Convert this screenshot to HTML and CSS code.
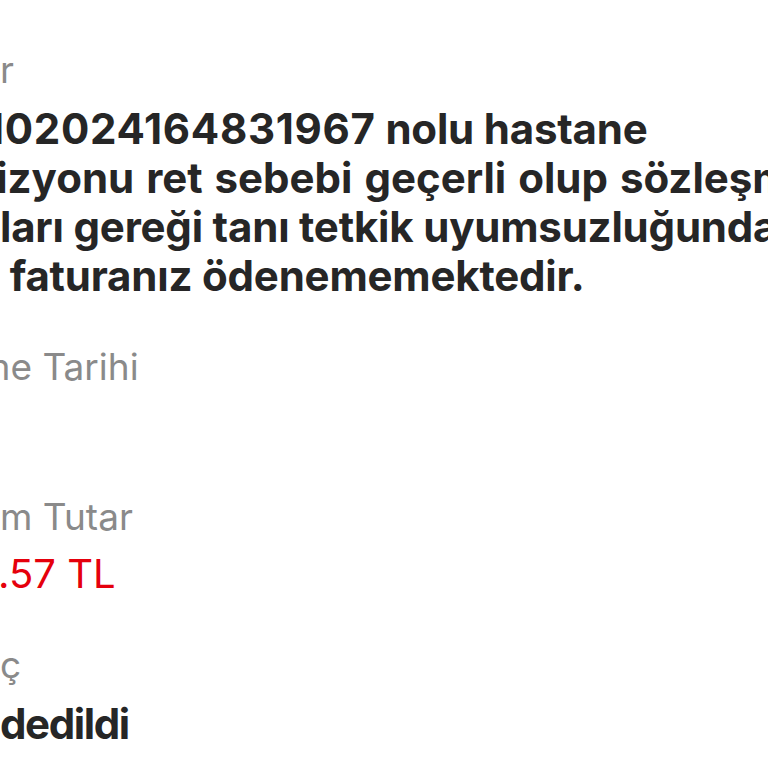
FILE: index.html
```html
<!DOCTYPE html>
<html>
	<head>
		<meta charset="UTF-8">
		<title>Fatura Detayı</title>
		<link rel="stylesheet" href="styles.css">
	</head>
	<body>
		<div class="detail">
			<div class="field">
				<div class="label">r</div>
				<div class="value bold">
					<div class="line cut-1"><span class="digits">102024164831967</span> nolu hastane</div>
					<div class="line cut-v">vizyonu ret sebebi geçerli olup sözleşme</div>
					<div class="line">ları gereği tanı tetkik uyumsuzluğundan</div>
					<div class="line">&nbsp;faturanız ödenememektedir.</div>
				</div>
			</div>
			<div class="field">
				<div class="label cut-m">me Tarihi</div>
				<div class="value">&nbsp;</div>
			</div>
			<div class="field">
				<div class="label">m Tutar</div>
				<div class="value red">.57 TL</div>
			</div>
			<div class="field">
				<div class="label">ç</div>
				<div class="value bold status">dedildi</div>
			</div>
		</div>
	</body>
</html>
```

FILE: styles.css
```css
* {
	margin: 0;
	padding: 0;
}

body {
	width: 768px;
	height: 768px;
	overflow: hidden;
	background: #ffffff;
	font-family: Inter, "Liberation Sans", sans-serif;
}

.detail {
	padding-top: 46px;
	white-space: nowrap;
}

.field {
	margin-bottom: 43px;
}

.label {
	font-size: 37px;
	line-height: 48px;
	color: #8a8a8a;
	margin-bottom: 10px;
}

.value {
	font-size: 42px;
	line-height: 49px;
	color: #262626;
}

.bold {
	font-weight: 700;
	letter-spacing: -0.2px;
}

.digits {
	letter-spacing: 0.7px;
}

.status {
	letter-spacing: -1.4px;
}

.red {
	font-size: 40px;
	color: #e5000c;
	text-indent: -2px;
	margin-top: -2px;
}

/* parts of the first letter that fall outside the screen */
.cut-1 {
	text-indent: -14px;
}

.cut-v {
	text-indent: -29px;
	letter-spacing: 0;
	word-spacing: 2px;
}

.cut-m {
	text-indent: -22px;
}
```
